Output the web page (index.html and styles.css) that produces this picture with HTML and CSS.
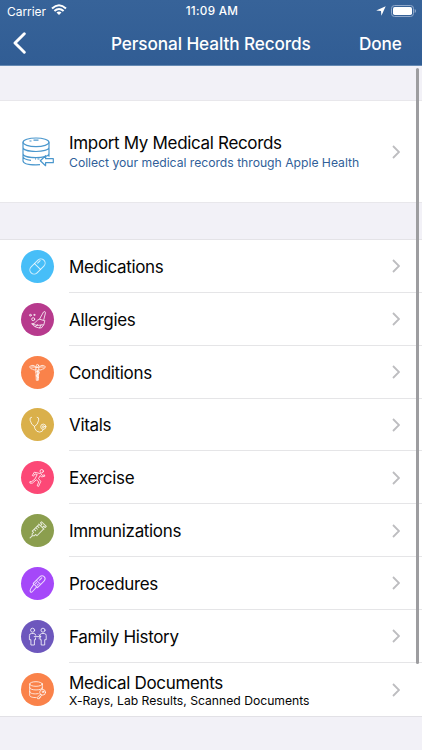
FILE: index.html
```html
<!DOCTYPE html>
<html lang="en">
<head>
<meta charset="utf-8">
<title>Personal Health Records</title>
<link rel="stylesheet" href="styles.css">
</head>
<body>
<header class="top">
  <div class="status">
    <div class="carrier"><span>Carrier</span>
      <svg width="16" height="12" viewBox="0 0 16 12" fill="none" stroke="#fff" stroke-width="2"><path d="M1 4.4Q8-2 15 4.4M3.4 7Q8 2.9 12.6 7"/><path d="M5.5 8.5Q8 6.6 10.5 8.5L8 11Z" fill="#fff" stroke="none"/></svg>
    </div>
    <span class="time">11:09 AM</span>
    <div class="indicators">
      <svg width="10" height="10" viewBox="0 0 10 10"><path d="M9.7.3L5.4 9.8 5 5 .2 4.6Z" fill="#fff"/></svg>
      <svg width="25" height="12" viewBox="0 0 25 12"><rect x=".5" y=".5" width="22" height="11" rx="3" fill="none" stroke="#91a9cb"/><rect x="2" y="2" width="19" height="8" rx="1.7" fill="#fff"/><path d="M23.7 4v4Q25 7.4 25 6T23.7 4" fill="#91a9cb"/></svg>
    </div>
  </div>
  <nav class="nav">
    <svg class="back" width="14" height="22" viewBox="0 0 14 22" fill="none" stroke="#fff" stroke-width="2.9" stroke-linecap="round" stroke-linejoin="round"><path d="M11.3 1.8L2 11l9.3 9.2"/></svg>
    <h1>Personal Health Records</h1>
    <span class="done">Done</span>
  </nav>
</header>
<main>
  <section class="import row">
    <svg class="db" width="34" height="30" viewBox="0 0 34 30" fill="none" stroke="#4a97cd" stroke-width="1.2" stroke-linejoin="round"><ellipse cx="15" cy="5.3" rx="13" ry="4.3"/><path d="M2 5.3v18.4c0 2.6 5.5 4.1 13 4.1l4-.2M28 5.3v14.5M2 10.3c0 5.6 26 5.6 26 0M2 16.4c0 5.6 26 5.6 26 0M2 19.3c0 3 4 3.7 8 4.1M12.5 3.1h5M8.5 4h2M14 22h1M16.5 22h2"/><path d="M19.3 23.7l5.3-5v3h7.7v4h-7.7v3Z"/></svg>
    <div class="copy"><b class="name">Import My Medical Records</b><small class="note">Collect your medical records through Apple Health</small></div>
    <svg class="chev" viewBox="0 0 8 14"><path d="M1 1l6 6-6 6"/></svg>
  </section>
  <section class="list">
    <div class="row item">
      <svg class="ic blue" viewBox="0 0 33 33"><g transform="rotate(-45 16.5 16.5)"><rect x="7.5" y="12.3" width="18" height="8.4" rx="4.2"/><path d="M16.5 12.3v8.4M19 14.2h3.5"/></g></svg>
      <b class="name">Medications</b><svg class="chev" viewBox="0 0 8 14"><path d="M1 1l6 6-6 6"/></svg>
    </div>
    <div class="row item">
      <svg class="ic plum" viewBox="0 0 33 33"><path d="M18.5 16.2l4-7.2q1.8-1.2 2 .7l-1.7 6.8 1 1.2q-.2 4.5-3.5 7.3-6.5 0-9.7-4.3 3 .3 4-1.7 2.2-2.5 3.9-2.8l4.3 1.3M12 21.5q4.5 1.8 10.2.3M14.5 23.5l2.3-2M18.5 25l1.5-3"/><circle cx="12.2" cy="16.2" r="1.5"/><circle cx="9.4" cy="12.2" r=".9"/><circle cx="13.3" cy="11.9" r=".6"/></svg>
      <b class="name">Allergies</b><svg class="chev" viewBox="0 0 8 14"><path d="M1 1l6 6-6 6"/></svg>
    </div>
    <div class="row item">
      <svg class="ic orange" viewBox="0 0 33 33"><path d="M15.2 11.5h2.6l-.5 12.8h-1.6ZM15.2 11.5Q12 7.5 8.6 10.7q1 2.6 3 2.5.8 1.2 3.6.7M17.8 11.5Q21 7.5 24.4 10.7q-1 2.6-3 2.5-.8 1.2-3.6.7M10.5 11h4.5M18 11h4.5M14.5 16q4-1.5 4 .5t-3.2 2.5q-1.2 1.3 2.2 2.5M16.5 14v9.5"/><circle cx="16.5" cy="9.6" r="1.2"/></svg>
      <b class="name">Conditions</b><svg class="chev" viewBox="0 0 8 14"><path d="M1 1l6 6-6 6"/></svg>
    </div>
    <div class="row item">
      <svg class="ic gold" viewBox="0 0 33 33"><path d="M10.6 9.2q-2.3 0-1.5 3 1.2 5 4.5 6.2 3-1.4 4.1-6.2.6-3-1.5-3M13.4 18.5l.5 2.2q1.5 3.4 4.7 3.4 3.3 0 3.7-2.8"/><circle cx="22.3" cy="18.7" r="2.6"/><circle cx="22.3" cy="18.7" r="1"/></svg>
      <b class="name">Vitals</b><svg class="chev" viewBox="0 0 8 14"><path d="M1 1l6 6-6 6"/></svg>
    </div>
    <div class="row item">
      <svg class="ic pink" viewBox="0 0 33 33"><circle cx="20.7" cy="10.2" r="1.7"/><path d="M19 12.5l-5.7-1.3-2 3.3 1.2.7 1.5-2.3 2.2.6-2.3 4.6-3.2 2.5H8.9v1.5l2.4.1 4-3.4 2.5 2-1.6 4 1.4.6 2.2-5-2.3-2.9 1.8-3 1.2 1.5 3.3-.8-.3-1.3-2.3.5-1.3-1.7Z"/></svg>
      <b class="name">Exercise</b><svg class="chev" viewBox="0 0 8 14"><path d="M1 1l6 6-6 6"/></svg>
    </div>
    <div class="row item">
      <svg class="ic green" viewBox="0 0 33 33"><g transform="rotate(-45 16.5 16.5)"><path d="M6 16.5h3l1.4-1.5h2v-1.8h9.6v6.6h-9.6V18h-2L9 16.5M22 12.8v7.4M22 15.2h2v-2h1.6v6.6H24v-2h-2M15 13.4v2M17.3 13.4v2M19.6 13.4v2"/></g></svg>
      <b class="name">Immunizations</b><svg class="chev" viewBox="0 0 8 14"><path d="M1 1l6 6-6 6"/></svg>
    </div>
    <div class="row item">
      <svg class="ic violet" viewBox="0 0 33 33"><g transform="rotate(-45 16.5 16.5)"><path d="M13.5 13.4h9.3q3.2 0 3.2 3t-3.2 3h-9.3ZM13.5 14.4L8 15.4q-2.4.7-2.4 2.3 0 1 2 .9l5.9-.2M18 13.4v6"/><path d="M15 15.2h1.5M15 17.5h1.5M20 15.5h3.5"/></g></svg>
      <b class="name">Procedures</b><svg class="chev" viewBox="0 0 8 14"><path d="M1 1l6 6-6 6"/></svg>
    </div>
    <div class="row item">
      <svg class="ic indigo" viewBox="0 0 33 33"><circle cx="11.6" cy="10.2" r="2"/><circle cx="22" cy="10.2" r="2"/><path d="M14.8 15.3q-.3-1.8-2-1.8h-2.4q-2 0-2 2v4.2h1.5V25h3.5v-5.3h1.1v-1.8M18.8 15.3q.3-1.8 2-1.8h2.4q2 0 2 2v4.2h-1.5V25h-3.5v-5.3h-1.1v-1.8M13.2 16.6h6.7M18 14.9l2 1.7-2 1.7"/></svg>
      <b class="name">Family History</b><svg class="chev" viewBox="0 0 8 14"><path d="M1 1l6 6-6 6"/></svg>
    </div>
    <div class="row item">
      <svg class="ic orange" viewBox="0 0 33 33"><ellipse cx="15" cy="11" rx="6.3" ry="2.3"/><path d="M8.7 11v11.4c0 1.4 3 2.3 6.4 2.2M21.3 11v5M8.7 14.8c0 3 12.6 3 12.6 0M8.7 18.6c0 2.3 5 2.7 8.5 2"/><circle cx="21.6" cy="19.3" r="2.9"/><circle cx="22" cy="18.8" r=".8"/><path d="M19.5 21.2l-3.2 3.2.3 1.3h1.8v-1.4h1.3v-1.4l1.2-.9"/></svg>
      <div class="copy"><b class="name">Medical Documents</b><small class="note">X-Rays, Lab Results, Scanned Documents</small></div><svg class="chev" viewBox="0 0 8 14"><path d="M1 1l6 6-6 6"/></svg>
    </div>
  </section>
  <div class="scrollbar"></div>
</main>
</body>
</html>
```
FILE: styles.css
```css
* { box-sizing: border-box; }
body { margin: 0; height: 750px; overflow: hidden; background: #f2f1f7; color: #050505; font-family: Inter, "Liberation Sans", sans-serif; }
svg { display: block; flex: none; }
.top { height: 66px; background: linear-gradient(#376399, #315d94); border-bottom: 1px solid #668ab3; color: #fff; }
.status { display: grid; grid-template-columns: 1fr auto 1fr; align-items: center; height: 22px; padding: 0 6px 0 7px; font-size: 12px; }
.carrier, .indicators { display: flex; align-items: center; gap: 5px; }
.carrier { letter-spacing: -.05px; }
.carrier svg { margin-top: -2px; }
.indicators { justify-content: flex-end; }
.time { font-weight: 550; font-size: 11.7px; letter-spacing: .3px; padding-left: 1px; }
.nav { display: grid; grid-template-columns: 98px 1fr 63px; align-items: center; height: 43px; padding-left: 13px; font-size: 17.2px; font-weight: 550; }
h1 { margin: 0; font: inherit; letter-spacing: -.1px; white-space: nowrap; }
.nav h1, .done { margin-top: -1px; }
.nav .back { margin-top: -1px; }
.done { letter-spacing: -.15px; }
main { position: relative; padding-top: 35px; }
.row { display: grid; grid-template-columns: 48px 1fr 8px; align-items: center; padding: 0 22px 0 21px; background: #fff; }
.import { height: 103px; margin-top: -1px; border-top: 1px solid #e8e7eb; border-bottom: 1px solid #e8e7eb; }
.copy { display: flex; flex-direction: column; white-space: nowrap; }
.name { font-size: 17px; line-height: 21px; font-weight: 400; letter-spacing: -.33px; }
.note { font-size: 12.2px; line-height: 16px; letter-spacing: -.02px; }
.import .copy { padding-top: 1px; }
.import .note { color: #315f99; margin-top: 1px; }
.list { margin-top: 36px; border-top: 1px solid #e4e3e7; border-bottom: 1px solid #e2e1e6; }
.item { height: 52.85px; padding-top: 1px; background: linear-gradient(#e5e5e7, #e5e5e7) 69px 100% / 100% 1px no-repeat #fff; }
.item > .name { padding-top: 1px; }
.item > .ic { margin-top: -1px; margin-left: -.5px; }
.item > .chev { margin-top: -1px; }
.item:last-child { background: #fff; padding-top: 2px; }
.item .note { line-height: 14px; }
.ic { width: 33px; height: 33px; border-radius: 50%; fill: none; stroke: rgba(255,255,255,.78); stroke-width: 1; stroke-linejoin: round; stroke-linecap: round; }
.blue { background: #47bef8; } .plum { background: #b73a8d; } .orange { background: #fa824a; }
.gold { background: #dab04b; } .pink { background: #fc4876; } .green { background: #8b9e4e; }
.violet { background: #a548f9; } .indigo { background: #6d57bd; }
.chev { width: 8px; height: 14px; fill: none; stroke: #bdbdc0; stroke-width: 1.8; }
.scrollbar { position: absolute; right: 3px; top: 2px; width: 3px; height: 596px; border-radius: 2px; background: #9d9da0; }
```
